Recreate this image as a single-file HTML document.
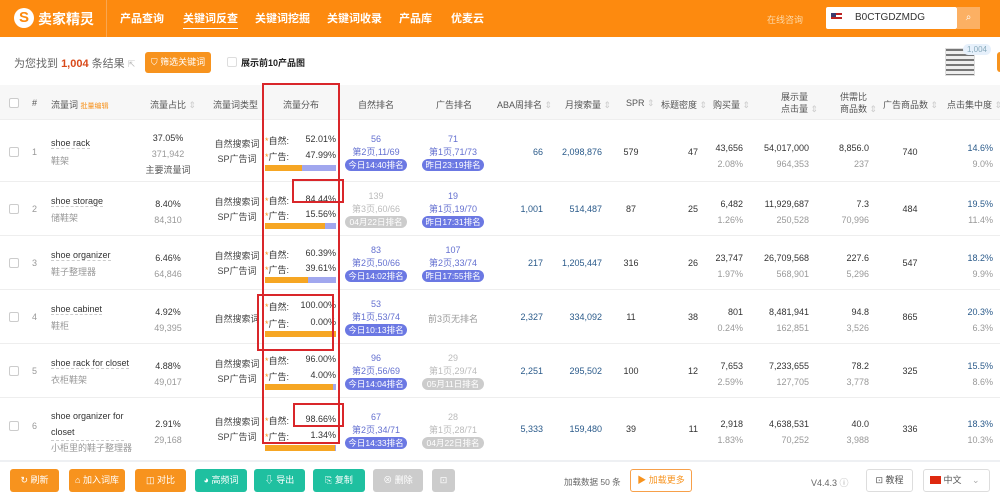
<!DOCTYPE html>
<html><head><meta charset="utf-8"><style>
*{box-sizing:border-box;margin:0;padding:0}
body{width:1000px;height:498px;overflow:hidden;background:#fff;font-family:"Liberation Sans","Noto Sans CJK SC",sans-serif;font-size:9px;color:#333;position:relative}
.a{position:absolute;white-space:nowrap}
.top{left:0;top:0;width:1000px;height:37px;background:#fd8a0f}
.nav{top:10px;color:#fff;font-size:11px;font-weight:bold}
.hd{left:0;top:85px;width:1000px;height:35px;background:#f7f7f7;border-bottom:1px solid #eee}
.hd .a{color:#555;font-size:9px}
.row{position:absolute;left:0;width:1000px;border-bottom:1px solid #eee}
.ck{left:9px;width:10px;height:10px;border:1px solid #ccc;border-radius:2px;background:#fff}
.g{color:#999}
.b{color:#2a5a8a}
.pl{color:#6470d0}
.pill{position:absolute;width:62px;height:12px;border-radius:6px;background:#6b78e3;color:#fff;font-size:8.5px;text-align:center;line-height:12px}
.pill.gr{background:#ccc}
.bar{position:absolute;left:265px;width:71px;height:6px;background:#a1a7ee}
.bar i{display:block;height:6px;background:#f6a623}
.red{position:absolute;border:2px solid #d9262a}
.btn{position:absolute;top:469px;height:23px;border-radius:3px;color:#fff;font-size:9px;text-align:center;line-height:23px}
.o{background:#f7931e}.t{background:#1fc0a0}.gy{background:#ccc}
</style></head><body>
<div class="a top"></div>
<div class="a" style="left:14px;top:8px;width:20px;height:20px;border-radius:50%;background:#fff;color:#fd8a0f;font-weight:bold;font-size:15px;text-align:center;line-height:20px">S</div>
<div class="a" style="left:38px;top:9px;color:#fff;font-size:14px;font-weight:bold">卖家精灵</div>
<div class="a" style="left:106px;top:0;width:1px;height:37px;background:#f9a650"></div>
<div class="a nav" style="left:120px">产品查询</div>
<div class="a nav" style="left:183px;border-bottom:1px solid #fff;padding-bottom:2px">关键词反查</div>
<div class="a nav" style="left:255px">关键词挖掘</div>
<div class="a nav" style="left:327px">关键词收录</div>
<div class="a nav" style="left:399px">产品库</div>
<div class="a nav" style="left:451px">优麦云</div>
<div class="a" style="left:767px;top:13px;color:#fcd9a9;font-size:9px">在线咨询</div>
<div class="a" style="left:826px;top:7px;width:131px;height:22px;background:#fff;border-radius:2px"></div>
<div class="a" style="left:831px;top:13px;width:11px;height:8px;background:linear-gradient(#b22 0 25%,#fff 25% 50%,#b22 50% 75%,#fff 75%)"><div style="width:5px;height:4px;background:#3c3b6e"></div></div>
<div class="a" style="left:855px;top:12px;font-size:10px;color:#333">B0CTGDZMDG</div>
<div class="a" style="left:957px;top:7px;width:23px;height:22px;background:#fcb063;color:#fff;text-align:center;line-height:22px;font-size:10px">⌕</div>

<div class="a" style="left:14px;top:55px;font-size:11px;color:#666">为您找到 <b style="color:#d94a1a">1,004</b> 条结果 <span style="color:#bbb;font-size:9px">⇱</span></div>
<div class="a" style="left:145px;top:52px;width:66px;height:21px;background:#f7931e;border-radius:3px;color:#fff;font-size:9px;line-height:21px;text-align:center">⛉ 筛选关键词</div>
<div class="a" style="left:227px;top:57px;width:10px;height:10px;border:1px solid #ddd;border-radius:2px"></div>
<div class="a" style="left:241px;top:56px;font-size:9px;font-weight:bold;color:#222">展示前10产品图</div>
<div class="a" style="left:945px;top:48px;width:30px;height:28px;border:1px solid #ddd;background:repeating-linear-gradient(#777 0 2px,#eee 2px 5px)"></div>
<div class="a" style="left:963px;top:44px;width:28px;height:11px;border-radius:6px;background:#e6f0fb;color:#8ab;font-size:8px;text-align:center;line-height:11px">1,004</div>
<div class="a" style="left:997px;top:52px;width:6px;height:20px;background:#f7931e;border-radius:3px"></div>

<div class="a hd"></div>
<div class="a" style="top:85px;left:0;width:1000px;height:35px">
<div class="a ck" style="top:13px"></div>
<div class="a" style="left:32px;top:13px;color:#555">#</div>
<div class="a" style="left:51px;top:13px;color:#555">流量词 <span style="color:#f7931e;font-size:7px">批量编辑</span></div>
<div class="a" style="left:150px;top:13px;color:#555">流量占比 <span style="color:#ccc">⇕</span></div>
<div class="a" style="left:213px;top:13px;color:#555">流量词类型</div>
<div class="a" style="left:283px;top:13px;color:#555">流量分布</div>
<div class="a" style="left:358px;top:13px;color:#555">自然排名</div>
<div class="a" style="left:436px;top:13px;color:#555">广告排名</div>
<div class="a" style="left:497px;top:13px;color:#555">ABA周排名 <span style="color:#ccc">⇕</span></div>
<div class="a" style="left:565px;top:13px;color:#555">月搜索量 <span style="color:#ccc">⇕</span></div>
<div class="a" style="left:626px;top:13px;color:#555">SPR <span style="color:#ccc">⇕</span></div>
<div class="a" style="left:661px;top:13px;color:#555">标题密度 <span style="color:#ccc">⇕</span></div>
<div class="a" style="left:713px;top:13px;color:#555">购买量 <span style="color:#ccc">⇕</span></div>
<div class="a" style="left:781px;top:6px;color:#555;line-height:12px">展示量<br>点击量 <span style="color:#ccc">⇕</span></div>
<div class="a" style="left:840px;top:6px;color:#555;line-height:12px">供需比<br>商品数 <span style="color:#ccc">⇕</span></div>
<div class="a" style="left:883px;top:13px;color:#555">广告商品数 <span style="color:#ccc">⇕</span></div>
<div class="a" style="left:947px;top:13px;color:#555">点击集中度 <span style="color:#ccc">⇕</span></div>
</div>

<!-- rows -->
<div class="row" style="top:120px;height:62px">
<div class="a ck" style="top:27px"></div><div class="a g" style="left:32px;top:27px">1</div>
<div class="a" style="left:51px;top:18px;border-bottom:1px dashed #ccc">shoe rack</div><div class="a g" style="left:51px;top:34px">鞋架</div>
<div class="a" style="left:140px;top:10px;width:56px;text-align:center;line-height:16px">37.05%<br><span class="g">371,942</span><br><span style="color:#555">主要流量词</span></div>
<div class="a" style="left:205px;top:17px;width:64px;text-align:center;line-height:15px;color:#444">自然搜索词<br>SP广告词</div>
<div class="a" style="left:265px;top:14px"><span style="color:#f7931e">*</span>自然:</div><div class="a" style="left:300px;top:14px;width:36px;text-align:right">52.01%</div>
<div class="a" style="left:265px;top:30px"><span style="color:#f7931e">*</span>广告:</div><div class="a" style="left:300px;top:30px;width:36px;text-align:right">47.99%</div>
<div class="bar" style="top:45px"><i style="width:52%"></i></div>
<div class="a pl" style="left:345px;top:13px;width:62px;text-align:center;line-height:13px">56<br>第2页,11/69</div><div class="pill" style="left:345px;top:39px">今日14:40排名</div>
<div class="a pl" style="left:422px;top:13px;width:62px;text-align:center;line-height:13px">71<br>第1页,71/73</div><div class="pill" style="left:422px;top:39px">昨日23:19排名</div>
<div class="a b" style="left:500px;top:27px;width:43px;text-align:right">66</div>
<div class="a b" style="left:550px;top:27px;width:52px;text-align:right">2,098,876</div>
<div class="a" style="left:620px;top:27px;width:22px;text-align:center">579</div>
<div class="a" style="left:670px;top:27px;width:28px;text-align:right">47</div>
<div class="a" style="left:700px;top:20px;width:43px;text-align:right;line-height:16px">43,656<br><span class="g">2.08%</span></div>
<div class="a" style="left:750px;top:20px;width:59px;text-align:right;line-height:16px">54,017,000<br><span class="g">964,353</span></div>
<div class="a" style="left:820px;top:20px;width:49px;text-align:right;line-height:16px">8,856.0<br><span class="g">237</span></div>
<div class="a" style="left:890px;top:27px;width:40px;text-align:center">740</div>
<div class="a" style="left:950px;top:20px;width:43px;text-align:right;line-height:16px"><span class="b">14.6%</span><br><span class="g">9.0%</span></div>
</div>

<div class="row" style="top:182px;height:54px">
<div class="a ck" style="top:22px"></div><div class="a g" style="left:32px;top:22px">2</div>
<div class="a" style="left:51px;top:14px;border-bottom:1px dashed #ccc">shoe storage</div><div class="a g" style="left:51px;top:29px">储鞋架</div>
<div class="a" style="left:140px;top:14px;width:56px;text-align:center;line-height:16px">8.40%<br><span class="g">84,310</span></div>
<div class="a" style="left:205px;top:13px;width:64px;text-align:center;line-height:15px;color:#444">自然搜索词<br>SP广告词</div>
<div class="a" style="left:265px;top:12px"><span style="color:#f7931e">*</span>自然:</div><div class="a" style="left:300px;top:12px;width:36px;text-align:right">84.44%</div>
<div class="a" style="left:265px;top:27px"><span style="color:#f7931e">*</span>广告:</div><div class="a" style="left:300px;top:27px;width:36px;text-align:right">15.56%</div>
<div class="bar" style="top:41px"><i style="width:84%"></i></div>
<div class="a g" style="left:345px;top:8px;width:62px;text-align:center;line-height:13px;color:#bbb">139<br>第3页,60/66</div><div class="pill gr" style="left:345px;top:34px">04月22日排名</div>
<div class="a pl" style="left:422px;top:8px;width:62px;text-align:center;line-height:13px">19<br>第1页,19/70</div><div class="pill" style="left:422px;top:34px">昨日17:31排名</div>
<div class="a b" style="left:500px;top:22px;width:43px;text-align:right">1,001</div>
<div class="a b" style="left:550px;top:22px;width:52px;text-align:right">514,487</div>
<div class="a" style="left:620px;top:22px;width:22px;text-align:center">87</div>
<div class="a" style="left:670px;top:22px;width:28px;text-align:right">25</div>
<div class="a" style="left:700px;top:14px;width:43px;text-align:right;line-height:16px">6,482<br><span class="g">1.26%</span></div>
<div class="a" style="left:750px;top:14px;width:59px;text-align:right;line-height:16px">11,929,687<br><span class="g">250,528</span></div>
<div class="a" style="left:820px;top:14px;width:49px;text-align:right;line-height:16px">7.3<br><span class="g">70,996</span></div>
<div class="a" style="left:890px;top:22px;width:40px;text-align:center">484</div>
<div class="a" style="left:950px;top:14px;width:43px;text-align:right;line-height:16px"><span class="b">19.5%</span><br><span class="g">11.4%</span></div>
</div>

<div class="row" style="top:236px;height:54px">
<div class="a ck" style="top:22px"></div><div class="a g" style="left:32px;top:22px">3</div>
<div class="a" style="left:51px;top:14px;border-bottom:1px dashed #ccc">shoe organizer</div><div class="a g" style="left:51px;top:29px">鞋子整理器</div>
<div class="a" style="left:140px;top:14px;width:56px;text-align:center;line-height:16px">6.46%<br><span class="g">64,846</span></div>
<div class="a" style="left:205px;top:13px;width:64px;text-align:center;line-height:15px;color:#444">自然搜索词<br>SP广告词</div>
<div class="a" style="left:265px;top:12px"><span style="color:#f7931e">*</span>自然:</div><div class="a" style="left:300px;top:12px;width:36px;text-align:right">60.39%</div>
<div class="a" style="left:265px;top:27px"><span style="color:#f7931e">*</span>广告:</div><div class="a" style="left:300px;top:27px;width:36px;text-align:right">39.61%</div>
<div class="bar" style="top:41px"><i style="width:60%"></i></div>
<div class="a pl" style="left:345px;top:8px;width:62px;text-align:center;line-height:13px">83<br>第2页,50/66</div><div class="pill" style="left:345px;top:34px">今日14:02排名</div>
<div class="a pl" style="left:422px;top:8px;width:62px;text-align:center;line-height:13px">107<br>第2页,33/74</div><div class="pill" style="left:422px;top:34px">昨日17:55排名</div>
<div class="a b" style="left:500px;top:22px;width:43px;text-align:right">217</div>
<div class="a b" style="left:550px;top:22px;width:52px;text-align:right">1,205,447</div>
<div class="a" style="left:620px;top:22px;width:22px;text-align:center">316</div>
<div class="a" style="left:670px;top:22px;width:28px;text-align:right">26</div>
<div class="a" style="left:700px;top:14px;width:43px;text-align:right;line-height:16px">23,747<br><span class="g">1.97%</span></div>
<div class="a" style="left:750px;top:14px;width:59px;text-align:right;line-height:16px">26,709,568<br><span class="g">568,901</span></div>
<div class="a" style="left:820px;top:14px;width:49px;text-align:right;line-height:16px">227.6<br><span class="g">5,296</span></div>
<div class="a" style="left:890px;top:22px;width:40px;text-align:center">547</div>
<div class="a" style="left:950px;top:14px;width:43px;text-align:right;line-height:16px"><span class="b">18.2%</span><br><span class="g">9.9%</span></div>
</div>

<div class="row" style="top:290px;height:54px">
<div class="a ck" style="top:22px"></div><div class="a g" style="left:32px;top:22px">4</div>
<div class="a" style="left:51px;top:14px;border-bottom:1px dashed #ccc">shoe cabinet</div><div class="a g" style="left:51px;top:29px">鞋柜</div>
<div class="a" style="left:140px;top:14px;width:56px;text-align:center;line-height:16px">4.92%<br><span class="g">49,395</span></div>
<div class="a" style="left:205px;top:22px;width:64px;text-align:center;color:#444">自然搜索词</div>
<div class="a" style="left:265px;top:10px"><span style="color:#f7931e">*</span>自然:</div><div class="a" style="left:296px;top:10px;width:40px;text-align:right">100.00%</div>
<div class="a" style="left:265px;top:27px"><span style="color:#f7931e">*</span>广告:</div><div class="a" style="left:300px;top:27px;width:36px;text-align:right">0.00%</div>
<div class="bar" style="top:41px"><i style="width:100%"></i></div>
<div class="a pl" style="left:345px;top:8px;width:62px;text-align:center;line-height:13px">53<br>第1页,53/74</div><div class="pill" style="left:345px;top:34px">今日10:13排名</div>
<div class="a g" style="left:422px;top:22px;width:62px;text-align:center">前3页无排名</div>
<div class="a b" style="left:500px;top:22px;width:43px;text-align:right">2,327</div>
<div class="a b" style="left:550px;top:22px;width:52px;text-align:right">334,092</div>
<div class="a" style="left:620px;top:22px;width:22px;text-align:center">11</div>
<div class="a" style="left:670px;top:22px;width:28px;text-align:right">38</div>
<div class="a" style="left:700px;top:14px;width:43px;text-align:right;line-height:16px">801<br><span class="g">0.24%</span></div>
<div class="a" style="left:750px;top:14px;width:59px;text-align:right;line-height:16px">8,481,941<br><span class="g">162,851</span></div>
<div class="a" style="left:820px;top:14px;width:49px;text-align:right;line-height:16px">94.8<br><span class="g">3,526</span></div>
<div class="a" style="left:890px;top:22px;width:40px;text-align:center">865</div>
<div class="a" style="left:950px;top:14px;width:43px;text-align:right;line-height:16px"><span class="b">20.3%</span><br><span class="g">6.3%</span></div>
</div>

<div class="row" style="top:344px;height:54px">
<div class="a ck" style="top:22px"></div><div class="a g" style="left:32px;top:22px">5</div>
<div class="a" style="left:51px;top:14px;border-bottom:1px dashed #ccc">shoe rack for closet</div><div class="a g" style="left:51px;top:29px">衣柜鞋架</div>
<div class="a" style="left:140px;top:14px;width:56px;text-align:center;line-height:16px">4.88%<br><span class="g">49,017</span></div>
<div class="a" style="left:205px;top:13px;width:64px;text-align:center;line-height:15px;color:#444">自然搜索词<br>SP广告词</div>
<div class="a" style="left:265px;top:10px"><span style="color:#f7931e">*</span>自然:</div><div class="a" style="left:300px;top:10px;width:36px;text-align:right">96.00%</div>
<div class="a" style="left:265px;top:26px"><span style="color:#f7931e">*</span>广告:</div><div class="a" style="left:300px;top:26px;width:36px;text-align:right">4.00%</div>
<div class="bar" style="top:40px"><i style="width:96%"></i></div>
<div class="a pl" style="left:345px;top:8px;width:62px;text-align:center;line-height:13px">96<br>第2页,56/69</div><div class="pill" style="left:345px;top:34px">今日14:04排名</div>
<div class="a" style="left:422px;top:8px;width:62px;text-align:center;line-height:13px;color:#bbb">29<br>第1页,29/74</div><div class="pill gr" style="left:422px;top:34px">05月11日排名</div>
<div class="a b" style="left:500px;top:22px;width:43px;text-align:right">2,251</div>
<div class="a b" style="left:550px;top:22px;width:52px;text-align:right">295,502</div>
<div class="a" style="left:620px;top:22px;width:22px;text-align:center">100</div>
<div class="a" style="left:670px;top:22px;width:28px;text-align:right">12</div>
<div class="a" style="left:700px;top:14px;width:43px;text-align:right;line-height:16px">7,653<br><span class="g">2.59%</span></div>
<div class="a" style="left:750px;top:14px;width:59px;text-align:right;line-height:16px">7,233,655<br><span class="g">127,705</span></div>
<div class="a" style="left:820px;top:14px;width:49px;text-align:right;line-height:16px">78.2<br><span class="g">3,778</span></div>
<div class="a" style="left:890px;top:22px;width:40px;text-align:center">325</div>
<div class="a" style="left:950px;top:14px;width:43px;text-align:right;line-height:16px"><span class="b">15.5%</span><br><span class="g">8.6%</span></div>
</div>

<div class="row" style="top:398px;height:62px;border-bottom:none">
<div class="a ck" style="top:23px"></div><div class="a g" style="left:32px;top:23px">6</div>
<div class="a" style="left:51px;top:10px;line-height:16px;border-bottom:1px dashed #ccc">shoe organizer for<br>closet</div><div class="a g" style="left:51px;top:43px">小柜里的鞋子整理器</div>
<div class="a" style="left:140px;top:18px;width:56px;text-align:center;line-height:16px">2.91%<br><span class="g">29,168</span></div>
<div class="a" style="left:205px;top:17px;width:64px;text-align:center;line-height:15px;color:#444">自然搜索词<br>SP广告词</div>
<div class="a" style="left:265px;top:16px"><span style="color:#f7931e">*</span>自然:</div><div class="a" style="left:300px;top:16px;width:36px;text-align:right">98.66%</div>
<div class="a" style="left:265px;top:32px"><span style="color:#f7931e">*</span>广告:</div><div class="a" style="left:300px;top:32px;width:36px;text-align:right">1.34%</div>
<div class="bar" style="top:47px"><i style="width:99%"></i></div>
<div class="a pl" style="left:345px;top:13px;width:62px;text-align:center;line-height:13px">67<br>第2页,34/71</div><div class="pill" style="left:345px;top:39px">今日14:33排名</div>
<div class="a" style="left:422px;top:13px;width:62px;text-align:center;line-height:13px;color:#bbb">28<br>第1页,28/71</div><div class="pill gr" style="left:422px;top:39px">04月22日排名</div>
<div class="a b" style="left:500px;top:26px;width:43px;text-align:right">5,333</div>
<div class="a b" style="left:550px;top:26px;width:52px;text-align:right">159,480</div>
<div class="a" style="left:620px;top:26px;width:22px;text-align:center">39</div>
<div class="a" style="left:670px;top:26px;width:28px;text-align:right">11</div>
<div class="a" style="left:700px;top:18px;width:43px;text-align:right;line-height:16px">2,918<br><span class="g">1.83%</span></div>
<div class="a" style="left:750px;top:18px;width:59px;text-align:right;line-height:16px">4,638,531<br><span class="g">70,252</span></div>
<div class="a" style="left:820px;top:18px;width:49px;text-align:right;line-height:16px">40.0<br><span class="g">3,988</span></div>
<div class="a" style="left:890px;top:26px;width:40px;text-align:center">336</div>
<div class="a" style="left:950px;top:18px;width:43px;text-align:right;line-height:16px"><span class="b">18.3%</span><br><span class="g">10.3%</span></div>
</div>

<!-- red boxes -->
<div class="red" style="left:262px;top:83px;width:78px;height:361px"></div>
<div class="red" style="left:292px;top:179px;width:52px;height:24px"></div>
<div class="red" style="left:257px;top:294px;width:77px;height:57px"></div>
<div class="red" style="left:293px;top:403px;width:51px;height:24px"></div>

<!-- footer -->
<div class="a" style="left:0;top:460px;width:1000px;height:38px;background:#fff;border-top:2px solid #eef0f3"></div>
<div class="btn o" style="left:10px;width:49px">↻ 刷新</div>
<div class="btn o" style="left:69px;width:56px">⌂ 加入词库</div>
<div class="btn o" style="left:135px;width:51px">◫ 对比</div>
<div class="btn t" style="left:195px;width:52px">◕ 高频词</div>
<div class="btn t" style="left:254px;width:51px">⇩ 导出</div>
<div class="btn t" style="left:313px;width:52px">⎘ 复制</div>
<div class="btn gy" style="left:373px;width:50px">⊗ 删除</div>
<div class="btn gy" style="left:432px;width:23px">⊡</div>
<div class="a" style="left:564px;top:476px;color:#666;font-size:8.5px">加载数据 50 条</div>
<div class="btn" style="left:630px;width:62px;border:1px solid #f7a04a;color:#f7931e;background:#fff;line-height:21px">▶ 加载更多</div>
<div class="a" style="left:811px;top:476px;color:#666">V4.4.3 <span style="color:#aaa">ⓘ</span></div>
<div class="btn" style="left:866px;width:47px;border:1px solid #ddd;color:#555;background:#fff;line-height:21px">⊡ 教程</div>
<div class="btn" style="left:923px;width:67px;border:1px solid #ddd;color:#555;background:#fff;line-height:21px;text-align:left;padding-left:6px"><span style="display:inline-block;width:11px;height:8px;background:#de2910;vertical-align:-1px"></span> 中文 <span style="color:#aaa;margin-left:8px">⌄</span></div>
</body></html>
